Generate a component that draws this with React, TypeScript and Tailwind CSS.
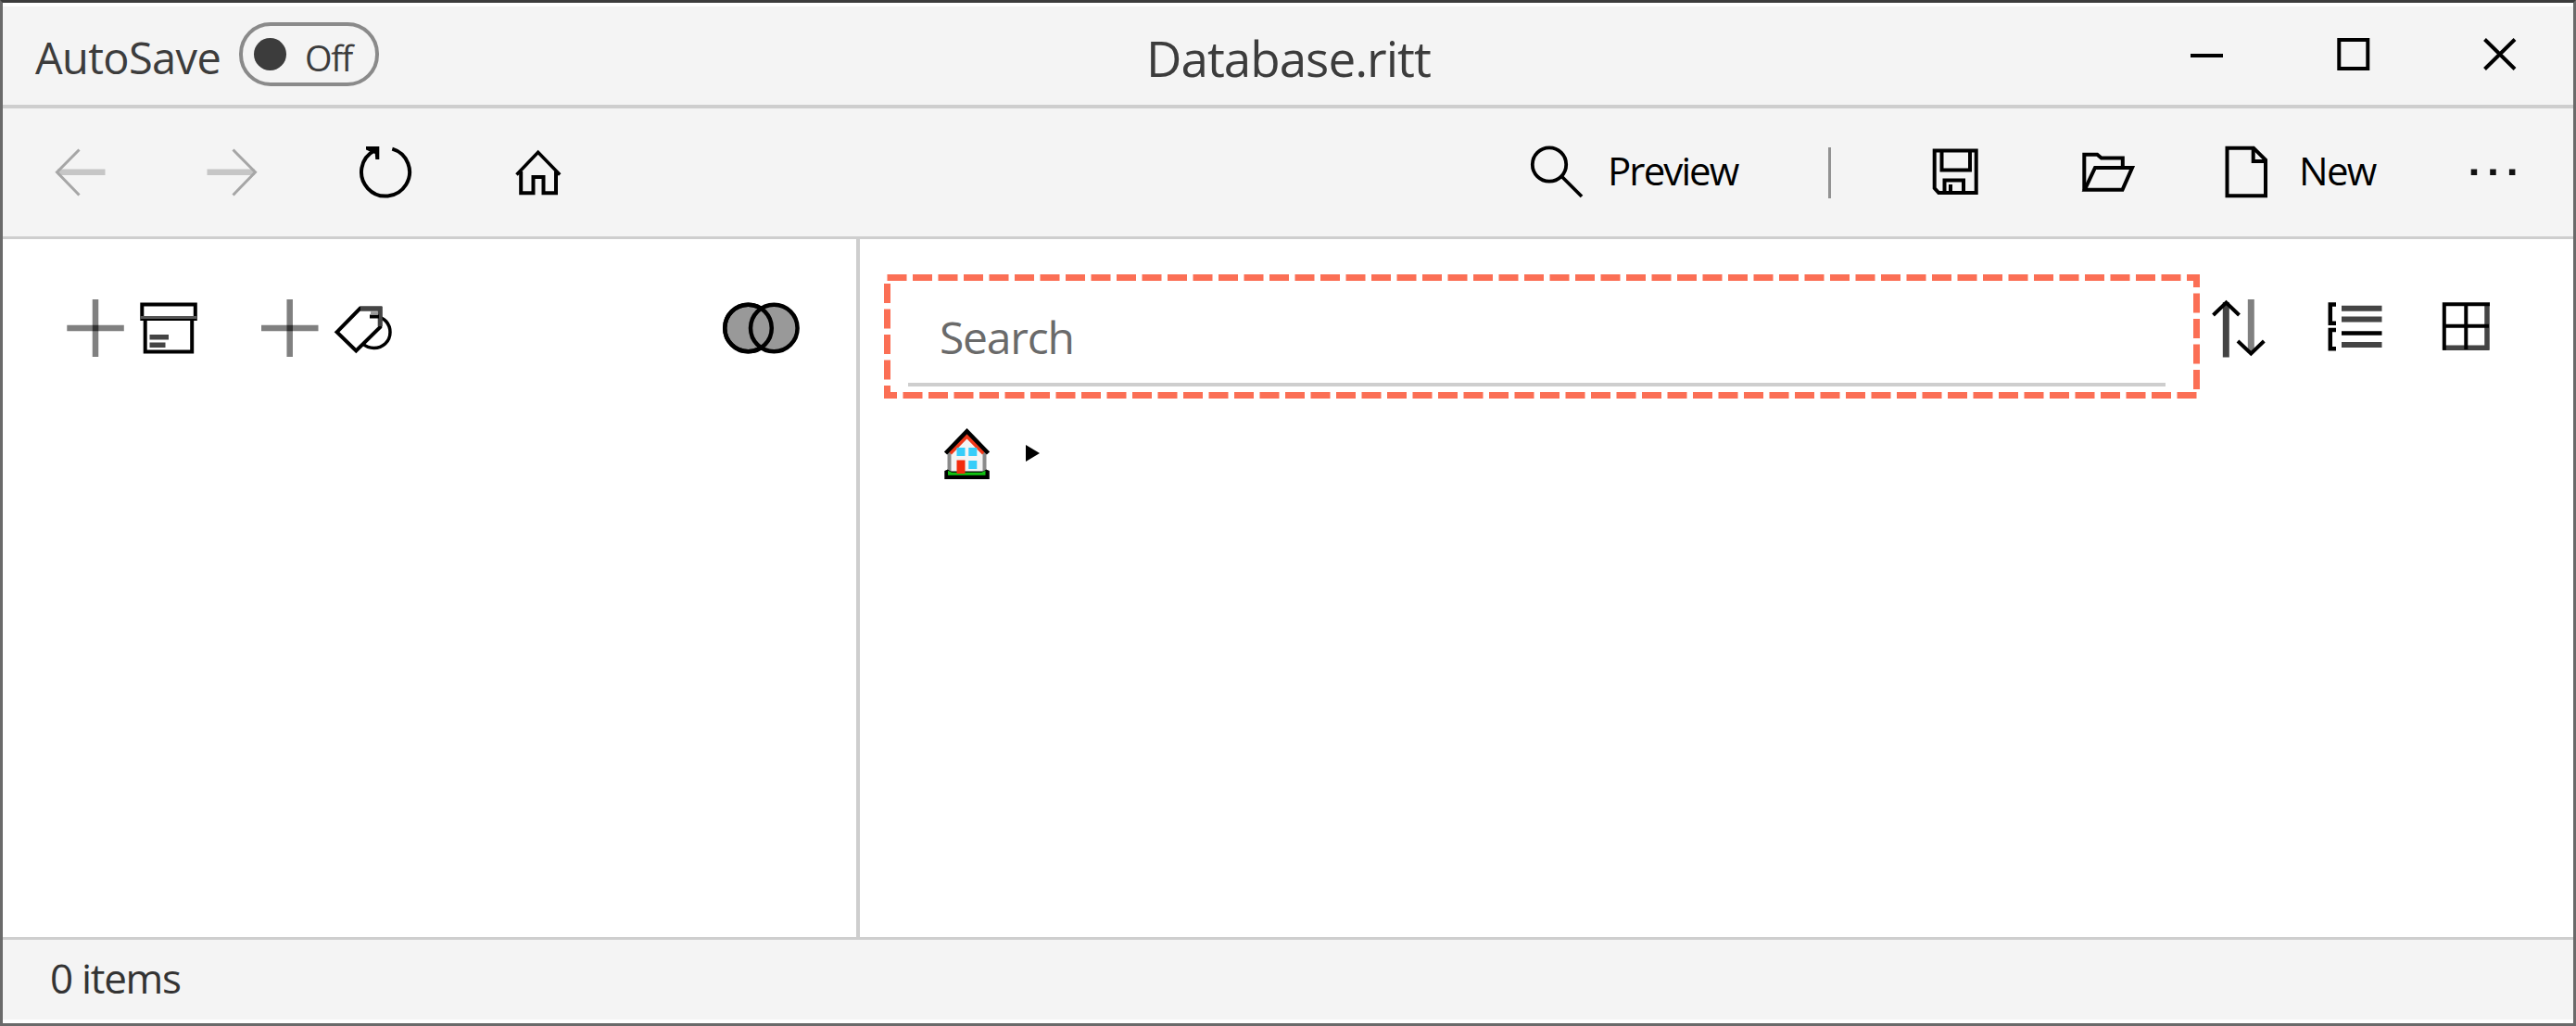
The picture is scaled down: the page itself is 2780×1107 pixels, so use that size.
import type { ReactNode } from "react";

type GlyphProps = { x: number; y: number; w: number; h: number; className?: string; sw?: number; children: ReactNode };

/* Line drawing on the window's own pixel grid: (x, y) is the top left corner of the glyph. */
function Glyph({ x, y, w, h, className = "", sw = 4, children }: GlyphProps) {
  return (
    <svg
      width={w}
      height={h}
      viewBox={`${x} ${y} ${w} ${h}`}
      fill="none"
      stroke="#000"
      strokeWidth={sw}
      className={`block shrink-0 ${className}`}
    >
      {children}
    </svg>
  );
}

function TitleBar() {
  return (
    <header className="flex h-[114px] shrink-0 items-center border-t-4 border-b-4 border-t-white border-b-[#cecece] bg-[#f4f4f4]">
      <div className="flex w-[1234px] items-center pl-[35px]">
        <span className="w-[220px] pt-[3px] text-[47px] leading-[64px] tracking-[-0.65px] whitespace-nowrap text-[#3c3c3c]">
          AutoSave
        </span>
        <button className="mb-[3px] flex h-[69px] w-[151px] items-center rounded-[34px] border-4 border-[#8a8a8a] pl-[12px]">
          <span className="size-[35px] rounded-full bg-[#3c3c3c]" />
          <span className="ml-[20px] pt-[6px] text-[38px] leading-[52px] tracking-[-1.4px] whitespace-nowrap text-[#3c3c3c]">
            Off
          </span>
        </button>
      </div>
      <h1 className="w-[330px] pt-[5px] text-[53px] leading-[72px] tracking-[-1px] whitespace-nowrap text-[#3c3c3c]">
        Database.ritt
      </h1>
      <div className="mr-[60px] mb-[3px] ml-auto flex items-center gap-[119px]">
        <Glyph x={2362} y={39} w={39} h={39}>
          <path d="M2364 60h35" />
        </Glyph>
        <Glyph x={2520} y={39} w={39} h={39}>
          <path d="M2524.3 43h31v31h-31z" />
        </Glyph>
        <Glyph x={2678} y={39} w={39} h={39}>
          <path d="M2681.5 42.500l32.500 32M2714 42.500l-32.500 32" />
        </Glyph>
      </div>
    </header>
  );
}

function Toolbar() {
  return (
    <nav className="flex h-[141px] shrink-0 items-center border-b-[3px] border-[#cecece] bg-[#f4f4f4] pl-[53px] text-[42px] leading-[58px] text-black">
      <Glyph x={56} y={156} w={60} h={60} sw={3}>
        <path d="M62 185.700h51.500" stroke="#c6c6c6" strokeWidth={6.500} />
        <path d="M85.500 161.500l-24 24.200l24 24.800" stroke="#a6a6a6" />
      </Glyph>
      <Glyph x={220} y={156} w={60} h={60} sw={3} className="ml-[104px]">
        <path d="M223.500 185.700h51.500" stroke="#c6c6c6" strokeWidth={6.500} />
        <path d="M251.500 161.500l24 24.200l-24 24.800" stroke="#a6a6a6" />
      </Glyph>
      <Glyph x={386} y={156} w={60} h={60} className="ml-[106px]">
        <path d="M423.300 160.600A26 26 0 1 1 404 162.500" />
        <path d="M395 158h14.300v14h-4l-0.500-6l-9.800-4.500z" fill="#000" stroke="none" />
      </Glyph>
      <Glyph x={552} y={156} w={60} h={60} className="ml-[106px]">
        <path d="M557.500 188.500l23.200-24.300l23.500 24.300" strokeWidth={3.500} />
        <path d="M562.200 185v23.300h13.300v-17.300h11v17.300h13.500v-23.300" />
      </Glyph>

      <button className="ml-auto flex items-center">
        <Glyph x={1650} y={156} w={60} h={60} sw={3.800}>
          <circle cx={1672} cy={177.500} r={18.200} />
          <path d="M1685.500 190.500l21.500 21.500" />
        </Glyph>
        <span className="ml-[25px] w-[169px] pb-[4px] text-left tracking-[-1.9px] whitespace-nowrap">Preview</span>
      </button>
      <div className="ml-[69px] h-[55px] w-[3px] bg-[#929292]" />
      <Glyph x={2080} y={156} w={60} h={60} className="ml-[104px]">
        <path d="M2087.700 162.500h45v45.500h-40.500l-4.500-5z" />
        <path d="M2095.500 162.500v21h30.500v-21M2098.500 208v-13.500h20.500v13.500M2105 208v-9" />
      </Glyph>
      <Glyph x={2244} y={156} w={60} h={60} className="ml-[104px]">
        <path d="M2249.300 205v-38.300h14l4.500 3.800h23v10.500" />
        <path d="M2249.800 204.700l11.200-23.700h40l-10.500 23.700z" />
      </Glyph>
      <button className="ml-[95px] flex items-center">
        <Glyph x={2399} y={156} w={50} h={60}>
          <path d="M2403.500 159.700h28.500l13 13v38.600h-41.500z" />
          <path d="M2431.700 160v14h13.500" />
        </Glyph>
        <span className="ml-[32px] w-[99px] pb-[4px] text-left tracking-[-1.700px] whitespace-nowrap">New</span>
      </button>
      <Glyph x={2664} y={156} w={54} h={60} className="mr-[59px] ml-[84px]">
        <path d="M2666.700 185.700h6.500M2687.200 185.700h6.500M2707.900 185.700h6.500" strokeWidth={6.500} stroke="#111" />
      </Glyph>
    </nav>
  );
}

function SidePanel() {
  return (
    <aside className="flex w-[925px] shrink-0 items-start border-r-4 border-[#cecece] bg-white pt-[62px] pl-[67px]">
      <Glyph x={70} y={320} w={66} h={68} sw={6.500}>
        <path d="M72.300 354h61.500M103 323v62" stroke="#808080" />
        <path d="M99.800 354h6.500" stroke="#333" />
      </Glyph>
      <Glyph x={149} y={320} w={66} h={68} className="ml-[13px]">
        <path d="M153.300 328.500h57.500v15.500h-57.500z" />
        <path d="M151 342.500h61.500" stroke="#555" strokeWidth={3} />
        <path d="M156.700 344v35.500h50.500v-35.500" />
        <path d="M161.500 363.700h20.500M161.500 372.300h17" stroke="#444" strokeWidth={5.500} />
      </Glyph>
      <Glyph x={280} y={320} w={66} h={68} sw={6.500} className="ml-[65px]">
        <path d="M282 354h61.500M312.700 323v62" stroke="#808080" />
        <path d="M309.500 354h6.500" stroke="#333" />
      </Glyph>
      <Glyph x={358} y={320} w={68} h={68} className="ml-[12px]">
        <path d="M406 341.500C415 342.500 421 349.500 421 358.500C421 368.500 413 375.500 403.500 375.500C398.500 375.500 395 374 391.500 371" strokeWidth={3.500} />
        <path d="M363.500 358.300l25.300-25.800h21.500v20.500l-26 25.500z" fill="#fff" />
        <path d="M389 333.300h21.200v18.700" stroke="#444" strokeWidth={5} />
        <path d="M399 341.500h10" strokeWidth={4} />
        <path d="M400 338h8" stroke="#999" strokeWidth={3.500} />
      </Glyph>
      <Glyph x={776} y={320} w={92} h={68} sw={4.500} className="ml-[350px]">
        <circle cx={807.500} cy={354} r={25.300} fill="#999" />
        <circle cx={835.300} cy={354} r={25.300} fill="#999" />
        <circle cx={807.500} cy={354} r={25.300} />
      </Glyph>
    </aside>
  );
}

function HouseIcon() {
  return (
    <Glyph x={1016} y={458} w={56} h={60}>
      <path d="M1024.500 486l19-20l19 20v27h-38z" fill="#f4f4f4" stroke="#8a8a8a" />
      <path d="M1025.500 488l18-18.500l18 18.500" stroke="#f0391a" strokeWidth={4} />
      <path d="M1020.500 488l23-23.800l23 23.800" strokeWidth={4.500} />
      <path d="M1032.500 482h9v9h-9zM1045.300 482h9v9h-9zM1045.300 496h9v9h-9z" fill="#36cdf9" stroke="none" />
      <path d="M1019.300 516v-9l3.500-1.500l3 2h35.500l3-2l3.500 1.500v9z" fill="#000" stroke="none" />
      <path d="M1023 511.700v-5l4 2h32.500l4-2v5z" fill="#12c412" stroke="none" />
      <path d="M1032.500 495.500h9v14.500h-9z" fill="#f32c0e" stroke="none" />
    </Glyph>
  );
}

function ContentPanel() {
  return (
    <main className="min-w-0 flex-1 bg-white pt-[38px] pl-[26px]">
      <div className="flex items-start">
        <div className="relative h-[134px] w-[1420px] shrink-0 px-[26px] pt-[35px]">
          <svg className="absolute inset-0" width={1420} height={134} fill="none">
            <rect x={3.500} y={3.500} width={1413} height={127} stroke="#fb6f55" strokeWidth={7} strokeDasharray="21 6.5" />
          </svg>
          <div className="h-[86px] w-[1357px] border-b-4 border-[#cecece] pl-[34px] text-[48px] leading-[66px] tracking-[-1.2px] text-[#6a6a6a]">
            Search
          </div>
        </div>
        <Glyph x={2384} y={320} w={64} h={70} className="mt-[24px] ml-[10px]">
          <path d="M2402.300 326v59.500" stroke="#444" strokeWidth={7} />
          <path d="M2429.300 323v58" stroke="#808080" strokeWidth={7} />
          <path d="M2388.500 340l14-13.500l14 13.500M2415 368l14.300 13.500l14-13.500" />
        </Glyph>
        <Glyph x={2510} y={320} w={64} h={70} sw={4.500} className="mt-[24px] ml-[62px]">
          <path d="M2521 328.500h-6.200v20.300h6.200M2521 356h-6.200v20.300h6.200" />
          <path d="M2527 332.700h43.500M2527 344.500h43.500M2527 372h43.500" stroke="#444" strokeWidth={6} />
          <path d="M2527 359.500h43.500" />
        </Glyph>
        <Glyph x={2632} y={320} w={60} h={70} className="mt-[24px] ml-[58px]">
          <path d="M2684 327v50.500M2636 375.200h50.500" stroke="#444" strokeWidth={5.500} />
          <path d="M2687 328.200h-49.200v49.500M2636 351.700h50M2661.300 327v50" />
        </Glyph>
      </div>
      <div className="mt-[29px] ml-[62px] flex items-center">
        <HouseIcon />
        <svg width={15} height={18} className="ml-[35px]" viewBox="0 0 15 18">
          <path d="M0 0L15 9L0 18z" />
        </svg>
      </div>
    </main>
  );
}

export default function App() {
  return (
    <div className="flex h-[1107px] w-[2780px] flex-col overflow-hidden border-[3px] border-[#6a6a6a] border-t-[#3c3c3c] bg-white font-['Open_Sans','Noto_Sans',sans-serif]">
      <TitleBar />
      <Toolbar />
      <div className="flex min-h-0 flex-1">
        <SidePanel />
        <ContentPanel />
      </div>
      <footer className="flex h-[93px] shrink-0 items-center border-t-[3px] border-b-4 border-t-[#cecece] border-b-white bg-[#f4f4f4] pb-[5px] pl-[51px] text-[44px] leading-[60px] tracking-[-1.3px] text-[#333]">
        0 items
      </footer>
    </div>
  );
}
